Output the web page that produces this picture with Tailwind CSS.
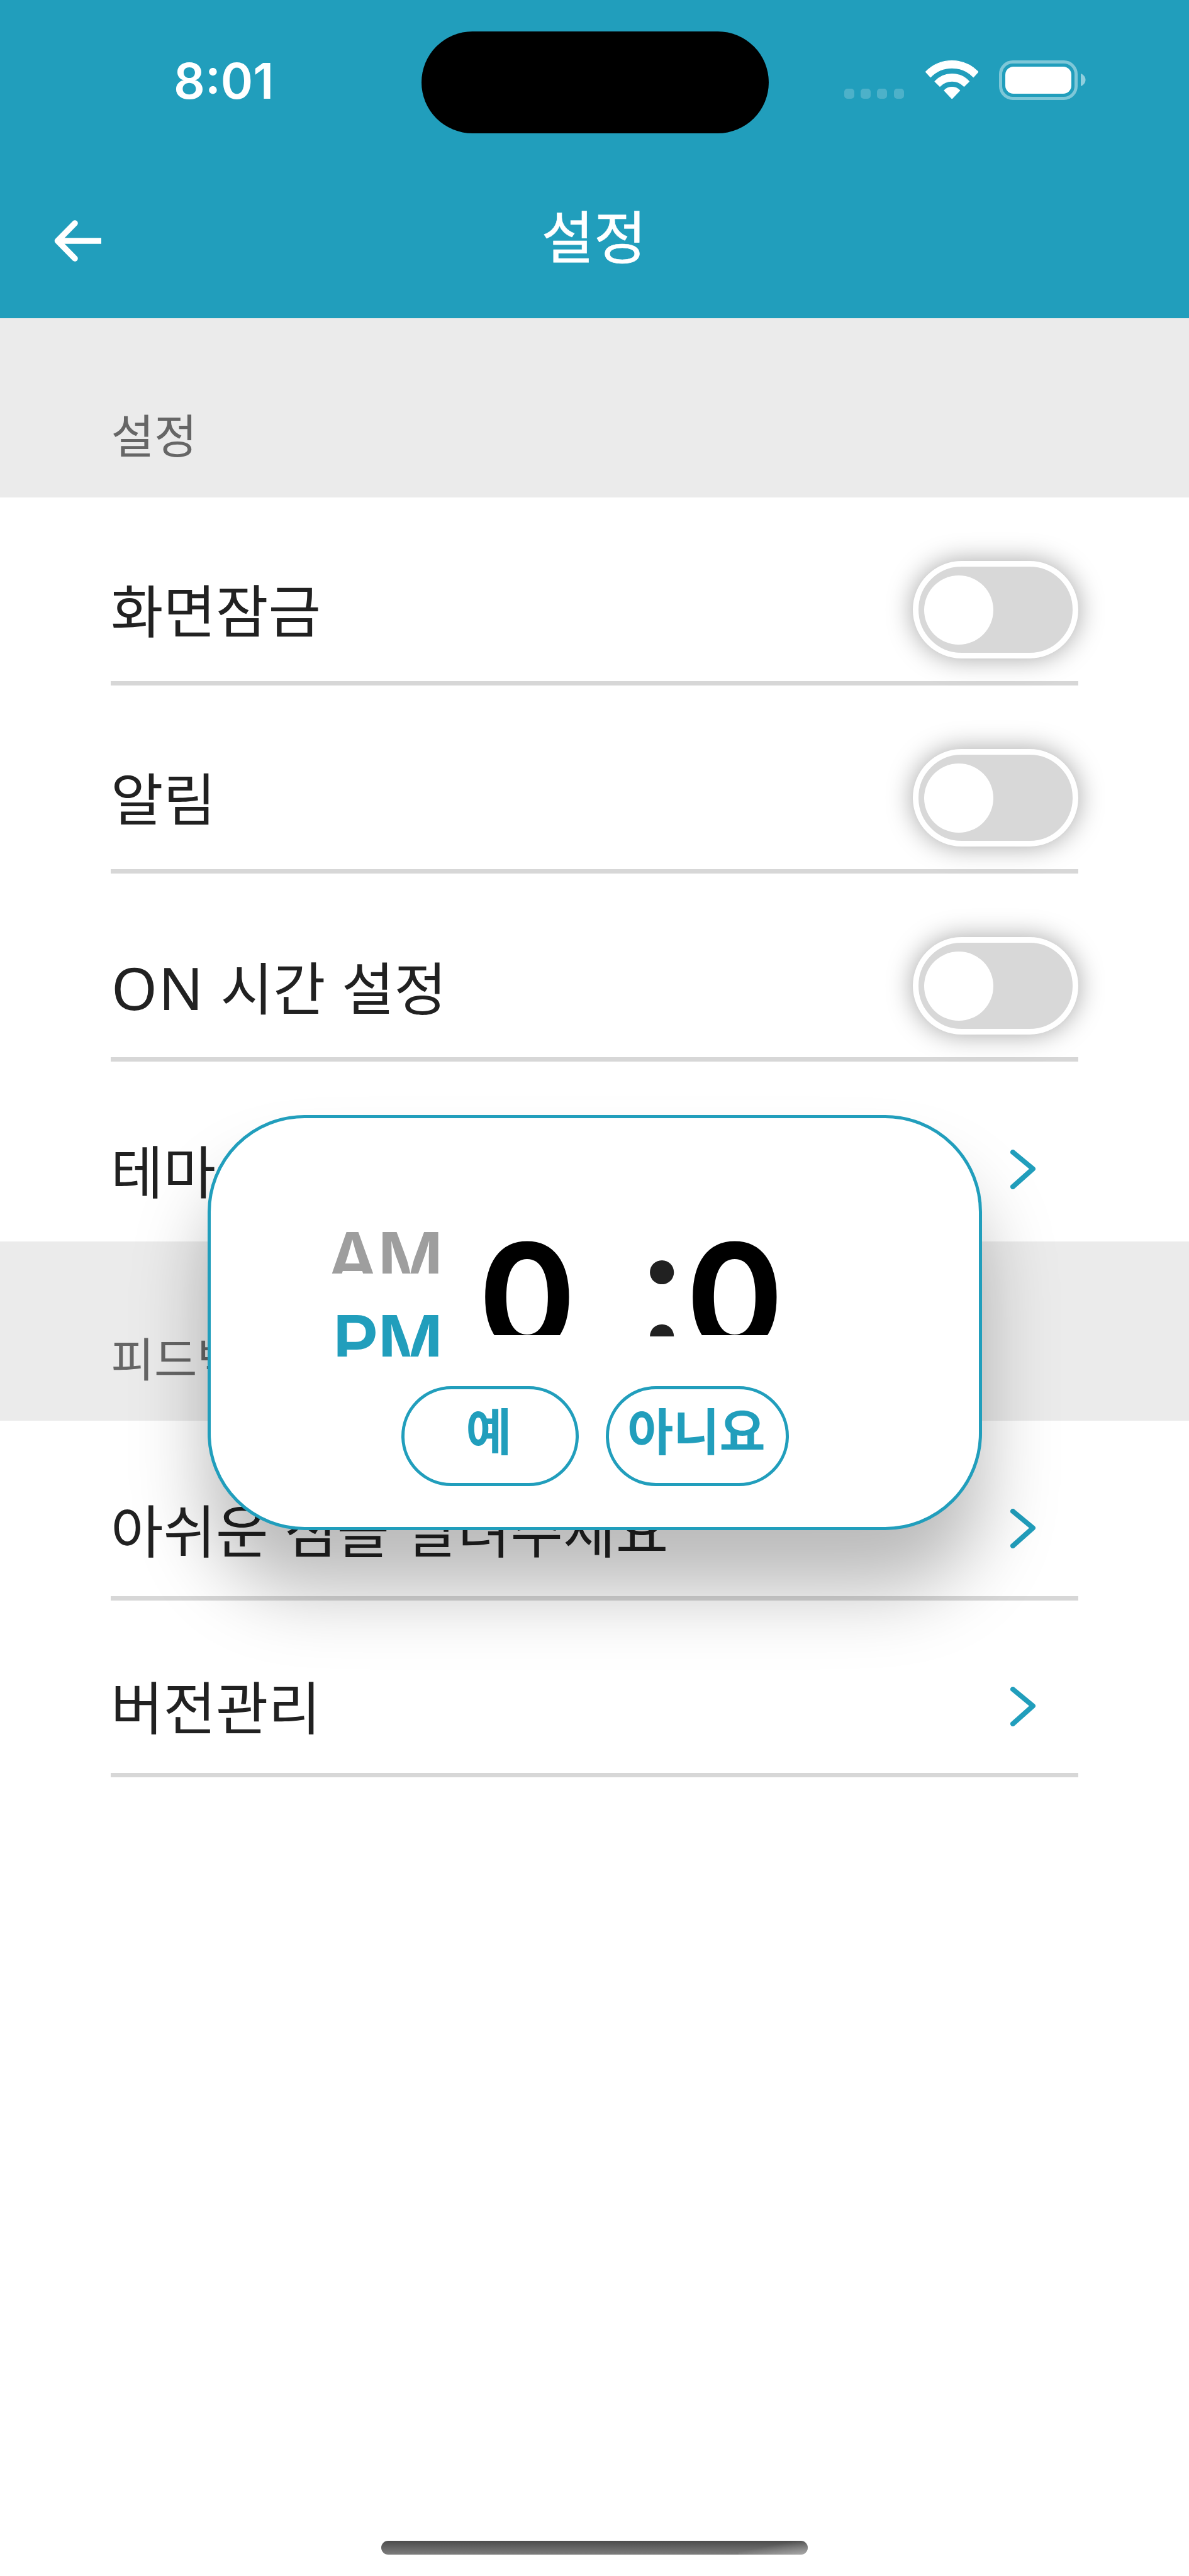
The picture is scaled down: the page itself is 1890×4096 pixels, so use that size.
<!DOCTYPE html>
<html lang="ko">
<head>
<meta charset="utf-8">
<meta name="viewport" content="width=device-width, initial-scale=1">
<title>설정</title>
<script src="https://cdn.jsdelivr.net/npm/@tailwindcss/browser@4"></script>
</head>
<body class="bg-white">
<div class="relative flex h-[4096px] w-[1890px] flex-col overflow-hidden bg-white font-['Noto_Sans_CJK_KR',sans-serif] text-[#212121]">

  <!-- Status bar and app bar -->
  <header class="flex h-[506px] shrink-0 flex-col bg-[#219ebc] text-white">
    <div class="flex h-[254px] items-start">
      <div class="w-[669.5px] pl-[276px] pt-[90px] font-['Inter',sans-serif] text-[78px] font-semibold leading-none">8:01</div>
      <div class="mt-[49.5px] h-[162.5px] w-[552px] rounded-full bg-black"></div>
      <div class="flex pl-[120.5px] pt-[95.5px]">
        <div class="mt-[45px] flex gap-[10.2px]">
          <span class="size-4 rounded-[5px] bg-white/20"></span>
          <span class="size-4 rounded-[5px] bg-white/20"></span>
          <span class="size-4 rounded-[5px] bg-white/20"></span>
          <span class="size-4 rounded-[5px] bg-white/20"></span>
        </div>
        <svg class="ml-[34px] h-[61.5px] w-[84.5px]" viewBox="0 0 268 195" fill="white" stroke="white" stroke-width="4" stroke-linejoin="round">
          <path d="M2 58A184 184 0 0 1 266 58L242 84A150 150 0 0 0 26 84Z"/>
          <path d="M48 106A117 117 0 0 1 220 106L195 131A84 84 0 0 0 73 131Z"/>
          <path d="M95 152A54 54 0 0 1 173 152L134 193Z"/>
        </svg>
        <div class="ml-[33px] flex items-center">
          <div class="h-[63.5px] w-[125px] rounded-[22px] border-[5.5px] border-white/42 p-[5px]">
            <div class="size-full rounded-[13px] bg-white"></div>
          </div>
          <svg class="ml-[5px] h-5 w-2" viewBox="0 0 8 20"><path d="M0 0C10 4 10 16 0 20Z" fill="white" fill-opacity=".5"/></svg>
        </div>
      </div>
    </div>
    <div class="grid h-[252px] grid-cols-[1fr_auto_1fr] items-start">
      <svg class="ml-[86px] mt-[96px] h-[66px] w-[75px]" viewBox="0 0 75 66" fill="none" stroke="white" stroke-width="9.6">
        <path d="M33 5L5.5 33L33 61" stroke-linecap="round" stroke-linejoin="round"/>
        <path d="M6 33H75"/>
      </svg>
      <h1 class="mt-[73px] pr-0.5 text-[90.8px] font-normal leading-none [-webkit-text-stroke:0.6px_white]">설정</h1>
    </div>
  </header>

  <!-- Settings -->
  <h2 class="h-[285px] shrink-0 bg-[#ebebeb] pl-[176.5px] pt-[145.5px] text-[74.4px] leading-none text-[#666]">설정</h2>
  <section class="mx-[176px] flex shrink-0 flex-col text-[90.8px] leading-none">
    <div class="flex h-[299px] items-center justify-between border-b-[7px] border-[#d7d7d7] pt-[65px]">
      <span class="pb-[5px]">화면잠금</span>
      <div class="h-[155px] w-[263px] rounded-full border-[9px] border-white bg-[#d8d8d8] px-[9px] py-[13.5px] shadow-[0_0_42px_rgba(0,0,0,0.36)]"><div class="size-[110px] rounded-full bg-white"></div></div>
    </div>
    <div class="flex h-[299px] items-center justify-between border-b-[7px] border-[#d7d7d7] pt-[65px]">
      <span class="pb-[5px]">알림</span>
      <div class="h-[155px] w-[263px] rounded-full border-[9px] border-white bg-[#d8d8d8] px-[9px] py-[13.5px] shadow-[0_0_42px_rgba(0,0,0,0.36)]"><div class="size-[110px] rounded-full bg-white"></div></div>
    </div>
    <div class="flex h-[299px] items-center justify-between border-b-[7px] border-[#d7d7d7] pt-[65px]">
      <div class="flex items-baseline pt-[4px]"><span class="pl-px font-['Noto_Sans',sans-serif] text-[93.5px] leading-none tracking-[2px]">ON</span><span class="whitespace-pre"> 시간 설정</span></div>
      <div class="h-[155px] w-[263px] rounded-full border-[9px] border-white bg-[#d8d8d8] px-[9px] py-[13.5px] shadow-[0_0_42px_rgba(0,0,0,0.36)]"><div class="size-[110px] rounded-full bg-white"></div></div>
    </div>
    <div class="flex h-[286px] items-center justify-between pr-[68px] pt-[57px]">
      <span>테마</span>
      <svg class="h-[63px] w-10" viewBox="0 0 40 63" fill="none" stroke="#219ebc" stroke-width="8" stroke-linecap="round" stroke-linejoin="round"><path d="M4 4L36 30.5L4 59"/></svg>
    </div>
  </section>

  <!-- Feedback -->
  <h2 class="h-[285px] shrink-0 bg-[#ebebeb] pl-[176.5px] pt-[145.5px] text-[74.4px] leading-none text-[#666]">피드백</h2>
  <section class="mx-[176px] flex shrink-0 flex-col text-[90.8px] leading-none">
    <div class="flex h-[286px] items-center justify-between border-b-[7px] border-[#d7d7d7] pr-[68px] pt-[64px]">
      <span>아쉬운 점을 알려주세요</span>
      <svg class="h-[63px] w-10" viewBox="0 0 40 63" fill="none" stroke="#219ebc" stroke-width="8" stroke-linecap="round" stroke-linejoin="round"><path d="M4 4L36 30.5L4 59"/></svg>
    </div>
    <div class="flex h-[281px] items-center justify-between border-b-[7px] border-[#d7d7d7] pr-[68px] pt-[62px]">
      <span class="pb-[4px]">버전관리</span>
      <svg class="h-[63px] w-10" viewBox="0 0 40 63" fill="none" stroke="#219ebc" stroke-width="8" stroke-linecap="round" stroke-linejoin="round"><path d="M4 4L36 30.5L4 59"/></svg>
    </div>
  </section>

  <!-- Home indicator -->
  <div class="mx-auto mb-[34px] mt-auto h-[22.5px] w-[678px] shrink-0 overflow-hidden rounded-full bg-linear-to-b from-[#4c4c4c] to-[#7e7e7e]">
    <div class="ml-auto h-full w-[110px] bg-linear-to-br from-transparent from-40% to-white/35"></div>
  </div>

  <!-- Time picker dialog -->
  <div role="dialog" class="absolute left-[330px] top-[1773px] flex h-[660px] w-[1231px] flex-col rounded-[154px] border-[5px] border-[#219ebc] bg-white shadow-[0_96px_120px_rgba(0,0,0,0.27)]">
    <div class="flex h-[426px] items-start pl-[180px] pt-[166px] font-['Inter',sans-serif]">
      <div class="flex w-[188px] flex-col items-end gap-[51px] text-[114px] font-semibold leading-none">
        <div class="h-[81px] overflow-hidden tracking-[-2px] text-[#9e9e9e]">AM</div>
        <div class="h-[81px] overflow-hidden tracking-[-2px] text-[#219ebc]">PM</div>
      </div>
      <div class="ml-[57px] h-[179px] w-[252px] overflow-hidden pl-px text-[233px] font-semibold leading-[236px] text-black [-webkit-text-stroke:3px_black]">0</div>
      <div class="h-[181px] w-[78px] overflow-hidden text-[265px] font-medium leading-[203px]">:</div>
      <div class="h-[179px] overflow-hidden pl-px text-[233px] font-semibold leading-[236px] text-black [-webkit-text-stroke:3px_black]">0</div>
    </div>
    <div class="flex justify-center gap-[43px] text-[79.5px] font-bold leading-none text-[#219ebc]">
      <button class="flex h-[159px] w-[282px] items-center justify-center rounded-full border-[5px] border-[#219ebc] pb-[23px] pr-[3px]">예</button>
      <button class="flex h-[159px] w-[291px] items-center justify-center rounded-full border-[5px] border-[#219ebc] pb-[23px] pr-[2px]">아니요</button>
    </div>
  </div>
</div>
</body>
</html>
